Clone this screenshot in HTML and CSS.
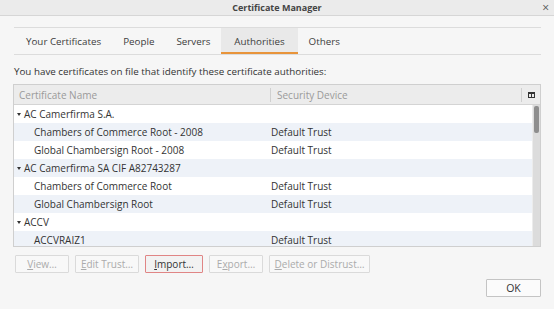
FILE: index.html
```html
<!DOCTYPE html>
<html>
<head>
<meta charset="utf-8">
<link rel="stylesheet" href="styles.css">
</head>
<body>
<div class="window">
  <div class="titlebar">
    <span class="title">Certificate Manager</span>
    <span class="close">×</span>
  </div>
  <div class="content">
    <div class="tabs">
      <div class="tab">Your Certificates</div>
      <div class="tab">People</div>
      <div class="tab">Servers</div>
      <div class="tab active">Authorities</div>
      <div class="tab">Others</div>
    </div>
    <p class="intro">You have certificates on file that identify these certificate authorities:</p>
    <div class="tree">
      <div class="tree-head">
        <div class="col col-name">Certificate Name</div>
        <div class="col col-device">Security Device</div>
        <div class="picker">
          <svg width="7" height="6" viewBox="0 0 7 6"><rect x="0" y="0" width="7" height="6" fill="#333"/><rect x="1" y="2" width="2" height="3" fill="#e9e9e9"/><rect x="4" y="2" width="2" height="3" fill="#e9e9e9"/></svg>
        </div>
      </div>
      <div class="tree-body">
        <div class="rows">
          <div class="row parent"><span class="twisty"></span><span class="cell-name">AC Camerfirma S.A.</span><span class="cell-device"></span></div>
          <div class="row child alt"><span class="cell-name">Chambers of Commerce Root - 2008</span><span class="cell-device">Default Trust</span></div>
          <div class="row child"><span class="cell-name">Global Chambersign Root - 2008</span><span class="cell-device">Default Trust</span></div>
          <div class="row parent alt"><span class="twisty"></span><span class="cell-name">AC Camerfirma SA CIF A82743287</span><span class="cell-device"></span></div>
          <div class="row child"><span class="cell-name">Chambers of Commerce Root</span><span class="cell-device">Default Trust</span></div>
          <div class="row child alt"><span class="cell-name">Global Chambersign Root</span><span class="cell-device">Default Trust</span></div>
          <div class="row parent"><span class="twisty"></span><span class="cell-name">ACCV</span><span class="cell-device"></span></div>
          <div class="row child alt"><span class="cell-name">ACCVRAIZ1</span><span class="cell-device">Default Trust</span></div>
        </div>
        <div class="scrollbar"><div class="thumb"></div></div>
      </div>
    </div>
    <div class="actions">
      <button class="btn btn-view" disabled><u>V</u>iew…</button>
      <button class="btn btn-edit" disabled><u>E</u>dit Trust…</button>
      <button class="btn btn-import focused"><u>I</u>mport…</button>
      <button class="btn btn-export" disabled>E<u>x</u>port…</button>
      <button class="btn btn-delete" disabled><u>D</u>elete or Distrust…</button>
    </div>
    <div class="footer">
      <button class="btn ok">OK</button>
    </div>
  </div>
</div>
</body>
</html>
```
FILE: styles.css
```css
* { box-sizing: border-box; }
html, body { margin: 0; padding: 0; }
body {
  width: 554px;
  height: 309px;
  overflow: hidden;
  font-family: "Open Sans", "Noto Sans", sans-serif;
  font-size: 10px;
  color: #3a3a3a;
  background: #f6f6f6;
}
.window { display: flex; flex-direction: column; height: 309px; }
.titlebar {
  height: 16px;
  background: #ebebeb;
  border-bottom: 1px solid #d6d6d6;
  display: flex;
  align-items: center;
  justify-content: center;
  position: relative;
}
.title { font-size: 9px; font-weight: 700; color: #444; }
.close {
  position: absolute;
  right: 5px;
  top: 0;
  line-height: 15px;
  font-size: 12px;
  color: #555;
}
.content { padding: 11px 13px 0 13px; display: flex; flex-direction: column; }
.tabs {
  display: flex;
  height: 28px;
  border-top: 1px solid #dcdcdc;
  border-bottom: 1px solid #dcdcdc;
  margin: 0 0 0 1px;
}
.tab {
  padding: 0 11px;
  display: flex;
  align-items: center;
  font-size: 9.8px;
  color: #3c3c3c;
}
.tab:first-child { padding-left: 12px; }
.tab.active {
  background: #e9e9e9;
  border-bottom: 2px solid #e8943a;
  padding: 2px 13px 0 13px;
}
.intro { margin: 10px 0 0 1px; font-size: 9.8px; line-height: 14px; color: #333; }
.tree {
  margin-top: 5px;
  border: 1px solid #cfcfcf;
  background: #fff;
  height: 163px;
  display: flex;
  flex-direction: column;
}
.tree-head {
  height: 20px;
  background: #ececec;
  border-bottom: 1px solid #d4d4d4;
  display: flex;
  align-items: center;
  font-size: 10px;
  color: #9a9a9a;
}
.col { height: 14px; display: flex; align-items: center; }
.col-name { width: 257px; padding-left: 5px; border-right: 1px solid #d0d0d0; }
.col-device { flex: 1; padding-left: 6px; border-right: 1px solid #d0d0d0; }
.picker { width: 18px; display: flex; justify-content: center; align-items: center; }
.tree-body { flex: 1; display: flex; overflow: hidden; }
.rows { flex: 1; }
.row {
  height: 18px;
  display: flex;
  align-items: center;
  font-size: 10px;
  color: #333;
}
.row.alt { background: #eef2f8; }
.twisty {
  width: 0; height: 0;
  margin-left: 3px;
  margin-right: 3px;
  border-left: 2.5px solid transparent;
  border-right: 2.5px solid transparent;
  border-top: 3.5px solid #333;
}
.parent .cell-name { width: 246px; }
.child .cell-name { width: 257px; padding-left: 20px; }
.scrollbar {
  width: 8px;
  background: #dcdcdc;
  border-left: 1px solid #ececec;
  padding: 1px 1px;
}
.thumb { height: 27px; background: #8e8e8e; border-radius: 2px; }
.actions { display: flex; gap: 6px; margin: 8px 0 0 2px; }
.btn {
  font-family: inherit;
  font-size: 10px;
  height: 18px;
  padding: 0 4px;
  border: 1px solid #dadada;
  background: #f8f8f8;
  color: #333;
  border-radius: 1px;
}
.btn-view { width: 54px; }
.btn-edit { width: 64px; }
.btn-import { width: 58px; }
.btn-export { width: 54px; }
.btn-delete { width: 101px; }
.btn:disabled { color: #ababab; }
.btn.focused { border-color: #e08585; background: #f2f2f2; }
.footer { display: flex; justify-content: flex-end; margin-top: 6px; }
.ok { width: 55px; border-color: #c4c4c4; background: #fbfbfb; height: 18px; font-size: 10.5px; }
```
